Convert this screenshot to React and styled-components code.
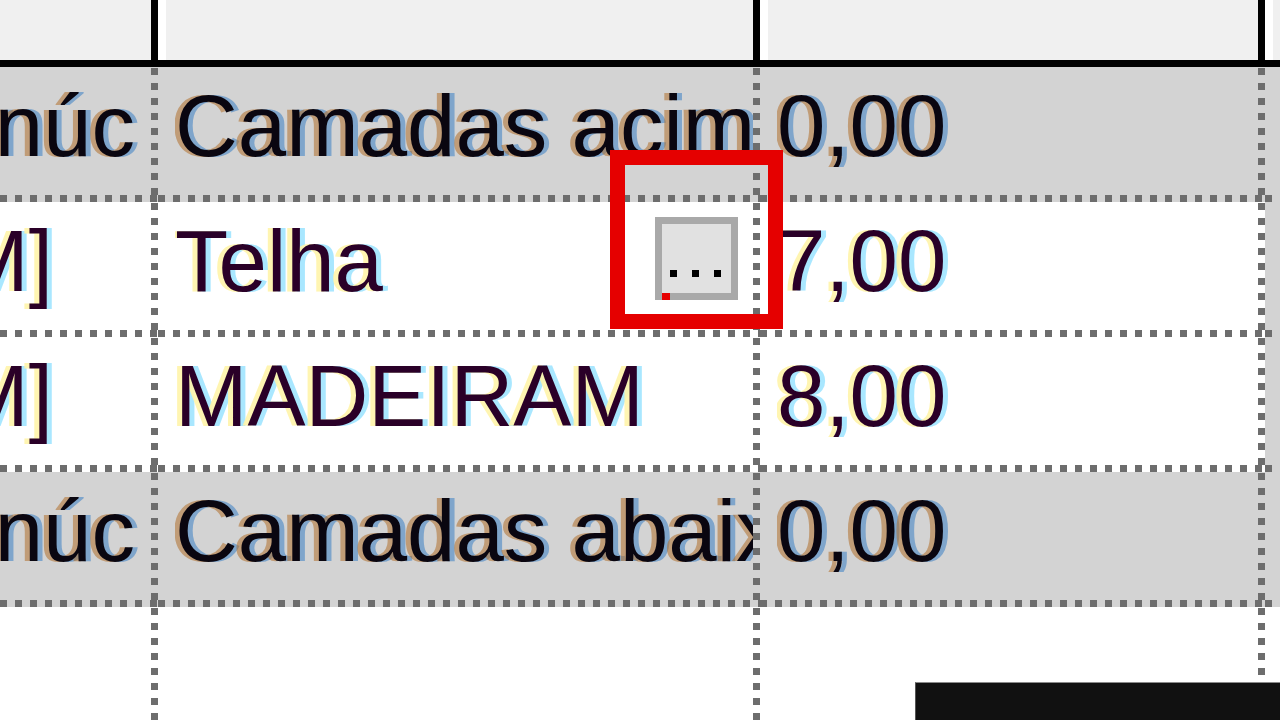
import React from "react";
import styled, { createGlobalStyle } from "styled-components";

const DOT = "#6d6d6d";
const GRAY = "#d3d3d3";
const COLS = "158px 602px 505px 1fr";

const vDots = `repeating-linear-gradient(to bottom, transparent 0 1px, ${DOT} 1px 8px, transparent 8px 15px) right top / 7px 100% no-repeat`;
const hDots = `repeating-linear-gradient(to right, ${DOT} 0 7px, transparent 7px 15px) left bottom / 100% 7px no-repeat`;

const GlobalStyle = createGlobalStyle`
  html, body {
    margin: 0;
    padding: 0;
    background: #fff;
    overflow: hidden;
  }
  body {
    font-family: "Liberation Sans", Arial, sans-serif;
  }
`;

const rows = [
  { id: 1, tone: "gray", name: "Camadas acima do núc", endGap: 16, layer: "Camadas acima do núcleo", value: "0,00" },
  { id: 2, tone: "white", name: "Cobertura [TELHAM]", endGap: 98, layer: "Telha", value: "7,00", picker: true },
  { id: 3, tone: "white", name: "Estrutura [MADEIRAM]", endGap: 98, layer: "MADEIRAM", value: "8,00" },
  { id: 4, tone: "gray", name: "Camadas abaixo do núc", endGap: 16, layer: "Camadas abaixo do núcleo", value: "0,00" },
];

export default function App() {
  return (
    <>
      <GlobalStyle />
      <Page>
        <HeaderRow>
          <HeaderCell $first />
          <HeaderCell />
          <HeaderCell />
          <HeaderCell $last />
        </HeaderRow>

        {rows.map((row) => {
          const bg = row.tone === "gray" ? GRAY : "#fff";
          return (
            <DataRow key={row.id}>
              <Cell $bg={bg} $align="flex-end" style={{ paddingRight: row.endGap + 7 }}>
                <Text $tone={row.tone} $fixed>
                  {row.name}
                </Text>
              </Cell>
              <Cell $bg={bg}>
                <Text $tone={row.tone}>{row.layer}</Text>
                {row.picker && (
                  <PickButton type="button" aria-label="...">
                    <Dot />
                    <Dot />
                    <Dot />
                    <FocusMark />
                  </PickButton>
                )}
              </Cell>
              <Cell $bg={bg}>
                <Text $tone={row.tone}>{row.value}</Text>
              </Cell>
              <Filler />
            </DataRow>
          );
        })}

        <EmptyRow>
          <Cell $bg="#fff" $open />
          <Cell $bg="#fff" $open />
          <Cell $bg="#fff" $open />
          <div />
        </EmptyRow>

        <Highlight />
        <StatusBar />
      </Page>
    </>
  );
}

const Page = styled.div`
  position: relative;
  width: 1280px;
  height: 720px;
  overflow: hidden;
  background: #fff;
`;

const HeaderRow = styled.div`
  display: grid;
  grid-template-columns: ${COLS};
  height: 67px;
  border-bottom: 7px solid #000;
  box-sizing: border-box;
`;

const HeaderCell = styled.div`
  background: #f0f0f0;
  border-left: ${(p) => (p.$first ? "none" : "8px solid #fff")};
  border-right: ${(p) => (p.$last ? "none" : "7px solid #000")};
`;

const DataRow = styled.div`
  display: grid;
  grid-template-columns: ${COLS};
  height: 135px;
`;

const EmptyRow = styled.div`
  display: grid;
  grid-template-columns: ${COLS};
  height: 113px;
`;

const Cell = styled.div`
  display: flex;
  align-items: flex-start;
  justify-content: ${(p) => p.$align || "space-between"};
  min-width: 0;
  overflow: hidden;
  box-sizing: border-box;
  padding: 0 7px 0 17px;
  background: ${(p) => (p.$open ? `${vDots}, ${p.$bg}` : `${vDots}, ${hDots}, ${p.$bg}`)};
`;

const Filler = styled.div`
  background: repeating-linear-gradient(to right, ${DOT} 0 7px, transparent 7px 15px) left bottom / 7px 7px
      no-repeat,
    ${GRAY};
`;

const Text = styled.span`
  flex: ${(p) => (p.$fixed ? "0 0 auto" : "1 1 auto")};
  min-width: 0;
  overflow: ${(p) => (p.$fixed ? "visible" : "hidden")};
  white-space: nowrap;
  padding-top: 9px;
  font-size: 87px;
  line-height: 100px;
  color: ${(p) => (p.$tone === "gray" ? "#0a0610" : "#2a0028")};
  text-shadow: ${(p) =>
    p.$tone === "gray"
      ? "-5px 0 0 rgba(176, 112, 44, 0.55), 5px 0 0 rgba(58, 128, 196, 0.55)"
      : "-5px 0 0 rgba(255, 244, 170, 0.9), 5px 0 0 rgba(160, 228, 255, 0.9)"};
`;

const PickButton = styled.button`
  position: relative;
  flex: 0 0 auto;
  display: flex;
  align-items: flex-start;
  gap: 15px;
  width: 83px;
  height: 83px;
  margin: 15px 15px 0 0;
  padding: 46px 0 0 8px;
  box-sizing: border-box;
  border: 7px solid #a9a9a9;
  background: #e1e1e1;
  cursor: default;
`;

const Dot = styled.span`
  width: 7px;
  height: 7px;
  background: #000;
`;

const FocusMark = styled.span`
  position: absolute;
  left: 0;
  bottom: -7px;
  width: 8px;
  height: 7px;
  background: #e60000;
`;

const Highlight = styled.div`
  position: absolute;
  left: 610px;
  top: 150px;
  width: 173px;
  height: 179px;
  box-sizing: border-box;
  border: 15px solid #e50000;
  pointer-events: none;
`;

const StatusBar = styled.div`
  position: absolute;
  right: 0;
  bottom: 0;
  width: 365px;
  height: 38px;
  box-sizing: border-box;
  background: #111;
  border-top: 1px solid #8a8a8a;
  border-left: 1px solid #555;
`;
